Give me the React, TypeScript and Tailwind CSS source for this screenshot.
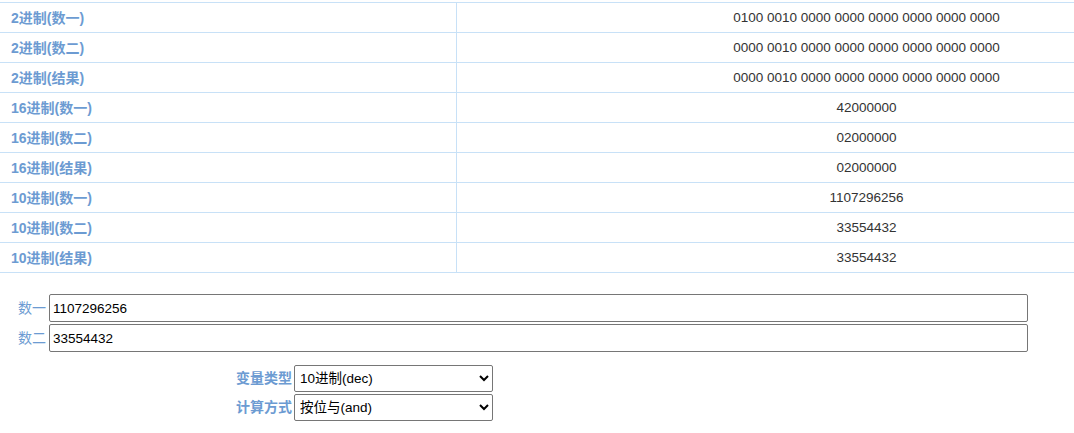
import { useState } from 'react';

const ROWS: [string, string][] = [
  ['2进制(数一)', '0100 0010 0000 0000 0000 0000 0000 0000'],
  ['2进制(数二)', '0000 0010 0000 0000 0000 0000 0000 0000'],
  ['2进制(结果)', '0000 0010 0000 0000 0000 0000 0000 0000'],
  ['16进制(数一)', '42000000'],
  ['16进制(数二)', '02000000'],
  ['16进制(结果)', '02000000'],
  ['10进制(数一)', '1107296256'],
  ['10进制(数二)', '33554432'],
  ['10进制(结果)', '33554432'],
];

export default function App() {
  const [numA, setNumA] = useState('1107296256');
  const [numB, setNumB] = useState('33554432');
  const [kind, setKind] = useState('dec');
  const [op, setOp] = useState('and');

  return (
    <div
      className="w-[1074px] h-[433px] overflow-hidden bg-white text-[13.5px] text-[#333]"
      style={{ fontFamily: '"Liberation Sans", "Noto Sans CJK SC", sans-serif' }}
    >
      {/* 结果表 */}
      <div className="pt-[2px]">
        <div className="w-[1276px] border-t border-[#c8e1f7]">
          {ROWS.map(([label, value]) => (
            <div key={label} className="flex h-[30px] border-b border-[#c8e1f7]">
              <div className="w-[457px] border-r border-[#c8e1f7] pl-[11px] pt-[2px] flex items-center text-[14px] font-bold text-[#6c9bd2]">
                {label}
              </div>
              <div className="flex-1 pt-[2px] flex items-center justify-center">{value}</div>
            </div>
          ))}
        </div>
      </div>

      {/* 输入 */}
      <div className="pt-[21px] pl-[18px] flex flex-col gap-[2px]">
        <div className="flex items-center">
          <span className="w-[31px] text-[14px] text-[#6c9bd2]">数一</span>
          <input
            value={numA}
            onChange={(e) => setNumA(e.target.value)}
            className="w-[979px] h-[28px] border border-[#767676] rounded-[2px] px-[3px] text-[13.5px] text-black outline-none"
          />
        </div>
        <div className="flex items-center">
          <span className="w-[31px] text-[14px] text-[#6c9bd2]">数二</span>
          <input
            value={numB}
            onChange={(e) => setNumB(e.target.value)}
            className="w-[979px] h-[28px] border border-[#767676] rounded-[2px] px-[3px] text-[13.5px] text-black outline-none"
          />
        </div>
      </div>

      <div className="pt-[13px] flex flex-col gap-[2px]">
        <div className="flex items-center">
          <span className="w-[294px] pr-[2px] text-right text-[14px] font-semibold text-[#6c9bd2]">变量类型</span>
          <select
            value={kind}
            onChange={(e) => setKind(e.target.value)}
            className="w-[199px] h-[27px] border border-[#767676] rounded-[2px] px-[1px] text-[13.5px] text-black bg-white"
          >
            <option value="bin">2进制(bin)</option>
            <option value="hex">16进制(hex)</option>
            <option value="dec">10进制(dec)</option>
          </select>
        </div>
        <div className="flex items-center">
          <span className="w-[294px] pr-[2px] text-right text-[14px] font-semibold text-[#6c9bd2]">计算方式</span>
          <select
            value={op}
            onChange={(e) => setOp(e.target.value)}
            className="w-[199px] h-[27px] border border-[#767676] rounded-[2px] px-[1px] text-[13.5px] text-black bg-white"
          >
            <option value="and">按位与(and)</option>
            <option value="or">按位或(or)</option>
            <option value="xor">按位异或(xor)</option>
          </select>
        </div>
      </div>
    </div>
  );
}
